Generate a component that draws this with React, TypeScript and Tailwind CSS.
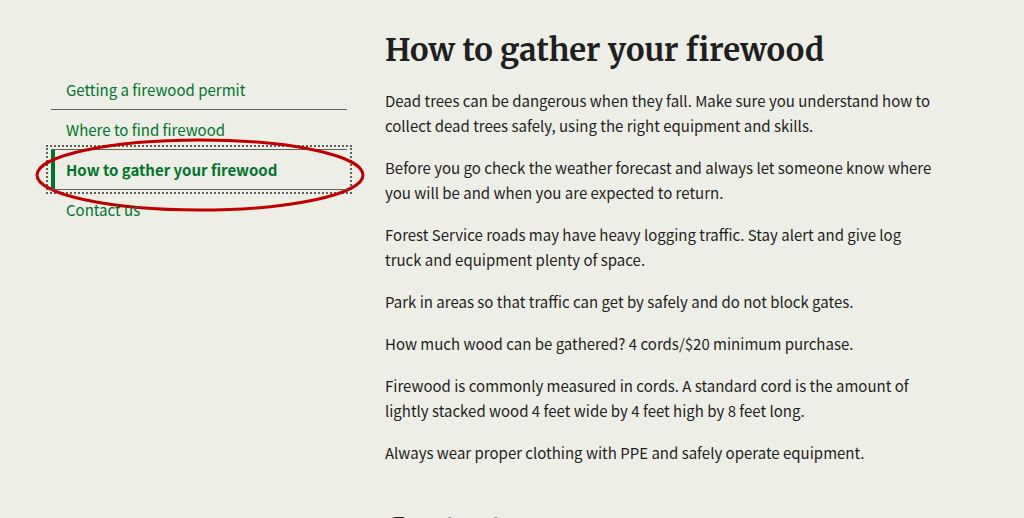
import React from "react";

const links = [
  { label: "Getting a firewood permit", id: "permit" },
  { label: "Where to find firewood", id: "where" },
  { label: "How to gather your firewood", id: "gather" },
  { label: "Contact us", id: "contact" },
];

const paragraphs = [
  "Dead trees can be dangerous when they fall. Make sure you understand how to collect dead trees safely, using the right equipment and skills.",
  "Before you go check the weather forecast and always let someone know where you will be and when you are expected to return.",
  "Forest Service roads may have heavy logging traffic. Stay alert and give log truck and equipment plenty of space.",
  "Park in areas so that traffic can get by safely and do not block gates.",
  "How much wood can be gathered? 4 cords/$20 minimum purchase.",
  "Firewood is commonly measured in cords. A standard cord is the amount of lightly stacked wood 4 feet wide by 4 feet high by 8 feet long.",
  "Always wear proper clothing with PPE and safely operate equipment.",
];

const headingClass =
  "font-['Merriweather','DejaVu_Serif_Condensed','DejaVu_Serif',serif] text-[31px] font-bold leading-[38px] text-[#1f1f21]";

function Highlight() {
  return (
    <svg
      aria-hidden="true"
      viewBox="0 0 332 76"
      preserveAspectRatio="none"
      className="pointer-events-none absolute -left-4 -top-[13px] h-[76px] w-[calc(100%+34px)]"
    >
      <ellipse cx="166" cy="38" rx="164" ry="35" fill="none" stroke="#c00000" strokeWidth="3" />
    </svg>
  );
}

function SideNav() {
  return (
    <nav aria-label="Firewood" className="w-1/3 shrink-0 pt-[69px]">
      <ul>
        {links.map((link) => {
          const current = link.id === "gather";
          return (
            <li key={link.id} className="relative border-t border-[#5f605c] first:border-transparent">
              <a
                href={`#${link.id}`}
                aria-current={current ? "page" : undefined}
                className={
                  current
                    ? "block border-l-4 border-[#00752a] py-2 pl-[11px] font-bold leading-[23px] text-[#00752a] outline-2 outline-offset-3 outline-dotted outline-[#5f605c]"
                    : "block py-2 pl-[15px] leading-[23px] text-[#00752a]"
                }
              >
                {link.label}
              </a>
              {current && <Highlight />}
            </li>
          );
        })}
      </ul>
    </nav>
  );
}

export default function App() {
  return (
    <div className="h-screen overflow-hidden bg-[#edeee6] font-['Noto_Sans_CJK_SC',sans-serif] text-[15px] text-[#1f1f21]">
      <div className="flex pl-[51px] pr-[85px]">
        <SideNav />
        <main className="min-w-0 flex-1 pl-[38px] pt-[31px]">
          <section id="gather">
            <h2 className={headingClass}>How to gather your firewood</h2>
            <div className="mt-[19px] space-y-[17px] leading-[25px]">
              {paragraphs.map((text) => (
                <p key={text}>{text}</p>
              ))}
            </div>
          </section>
          <section id="contact" className="pt-[45px]">
            <h2 className={headingClass}>Contact us</h2>
          </section>
        </main>
      </div>
    </div>
  );
}
